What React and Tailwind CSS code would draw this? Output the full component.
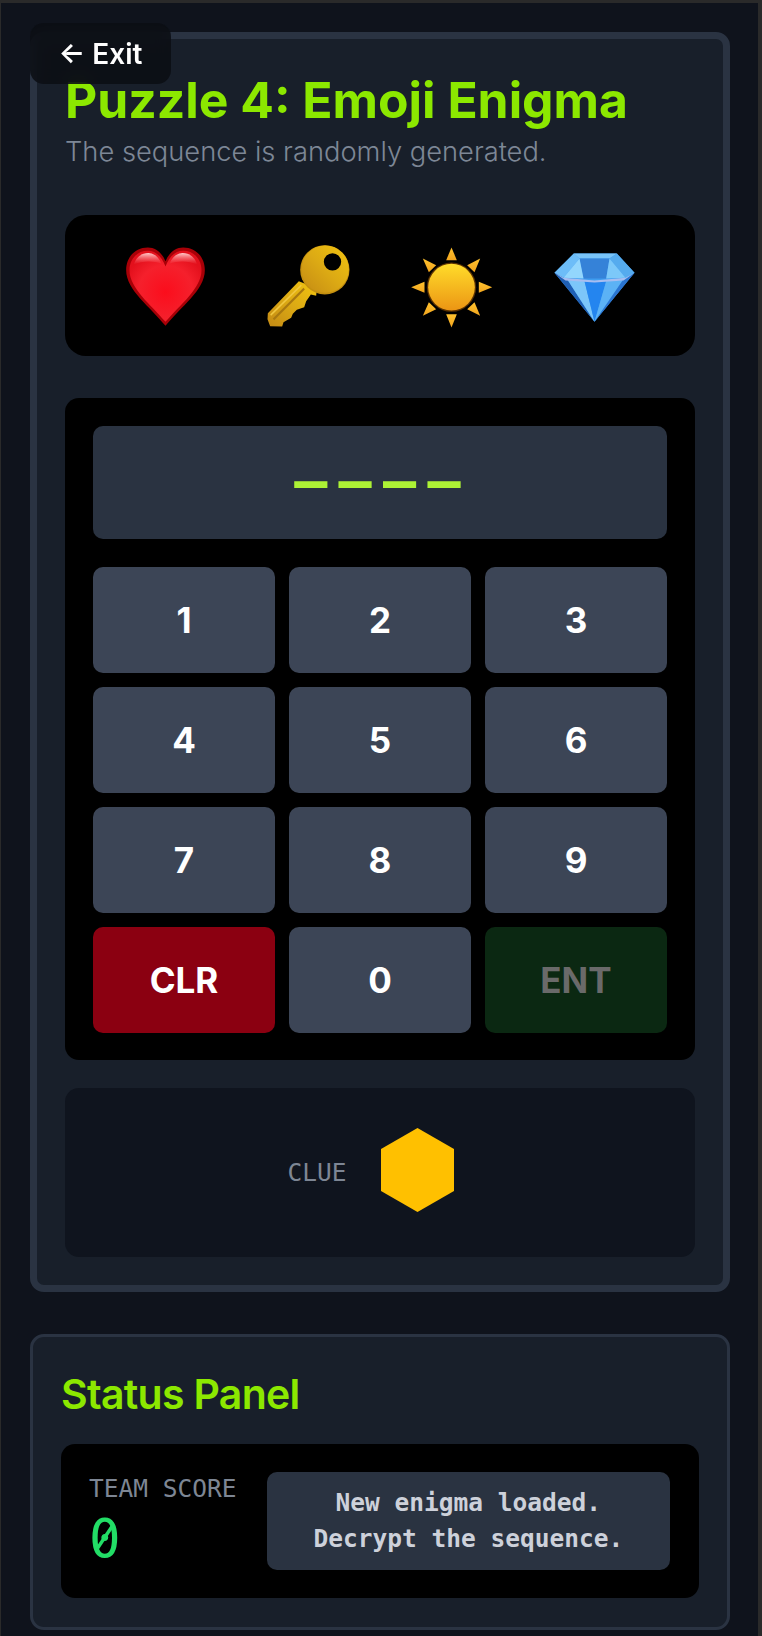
const sans = "font-['Inter',sans-serif]";
const mono = "font-['DejaVu_Sans_Mono',monospace]";

function Heart() {
  return (
    <svg viewBox="64.5 50.5 261 261" className="h-[87px] w-[87px]">
      <defs>
        <radialGradient id="heartFill" cx="50%" cy="58%" r="58%">
          <stop offset="0%" stopColor="#fb0d1c" />
          <stop offset="65%" stopColor="#f5202c" />
          <stop offset="100%" stopColor="#e3101c" />
        </radialGradient>
        <linearGradient id="heartShine" x1="0" y1="0" x2="0" y2="1">
          <stop offset="0%" stopColor="#ffc9c9" />
          <stop offset="100%" stopColor="#ff6a70" stopOpacity="0" />
        </linearGradient>
      </defs>
      <path
        d="M195 302C150 245 77 195 77 135C77 95 105 67 142 67C166 67 185 84 195 108C205 84 224 67 248 67C285 67 313 95 313 135C313 195 240 245 195 302Z"
        fill="#a80007"
      />
      <path
        d="M195 290C152 238 87 190 87 135C87 101 111 77 142 77C166 77 185 96 195 124C205 96 224 77 248 77C279 77 303 101 303 135C303 190 238 238 195 290Z"
        fill="url(#heartFill)"
      />
      <path d="M100 118C108 92 128 82 148 84C164 86 176 98 183 116C160 106 125 106 100 118Z" fill="url(#heartShine)" />
      <path d="M290 118C282 92 262 82 242 84C226 86 214 98 207 116C230 106 265 106 290 118Z" fill="url(#heartShine)" />
    </svg>
  );
}

function Key() {
  return (
    <svg viewBox="496.5 50.5 261 261" className="h-[87px] w-[87px]">
      <defs>
        <linearGradient id="keyFill" x1="1" y1="0" x2="0" y2="1">
          <stop offset="0%" stopColor="#f2c40f" />
          <stop offset="50%" stopColor="#dcaa14" />
          <stop offset="100%" stopColor="#c48a14" />
        </linearGradient>
      </defs>
      <path
        d="M598 168L505 264L504 282L512 303L548 304L552 291L575 278L580 266L592 254L614 246L620 228L634 208L650 212L652 190Z"
        fill="url(#keyFill)"
      />
      <path d="M612 188L520 280L524 285L616 193Z" fill="#a87810" />
      <path d="M604 178L512 268L515 272L607 182Z" fill="#f0c740" />
      <circle cx="676" cy="134" r="74" fill="#c48f0f" />
      <circle cx="677" cy="132" r="71" fill="url(#keyFill)" />
      <circle cx="699" cy="110" r="26" fill="#000" />
    </svg>
  );
}

function Sun() {
  return (
    <svg viewBox="85.5 50.5 261 261" className="h-[87px] w-[87px]">
      <defs>
        <linearGradient id="sunFill" x1="0" y1="0" x2="0" y2="1">
          <stop offset="0%" stopColor="#ffdc2a" />
          <stop offset="100%" stopColor="#ec9514" />
        </linearGradient>
        <linearGradient id="rayFill" x1="0" y1="0" x2="0" y2="1">
          <stop offset="0%" stopColor="#ffc22e" />
          <stop offset="100%" stopColor="#f2a51e" />
        </linearGradient>
      </defs>
      <g fill="url(#rayFill)">
        <polygon points="216,67 200,105 232,105" />
        <polygon points="338,186 298,170 298,203" />
        <polygon points="216,307 200,267 232,267" />
        <polygon points="95,186 135,170 135,203" />
        <polygon points="302,100 263,120 285,141" />
        <polygon points="130,100 148,141 170,120" />
        <polygon points="302,272 263,252 285,231" />
        <polygon points="130,272 170,252 148,231" />
      </g>
      <circle cx="216" cy="186" r="74" fill="#5c3200" />
      <circle cx="216" cy="186" r="70" fill="url(#sunFill)" />
    </svg>
  );
}

function Gem() {
  return (
    <svg viewBox="514.5 50.5 261 261" className="h-[87px] w-[87px]">
      <polygon points="583,85 712,85 765,143 645,290 525,143" fill="#3f9df0" />
      <polygon points="583,85 525,143 552,158 600,100" fill="#6dbdf8" />
      <polygon points="583,85 712,85 690,100 600,100" fill="#79c4f9" />
      <polygon points="712,85 765,143 738,158 690,100" fill="#55abee" />
      <polygon points="600,100 690,100 680,160 612,160" fill="#3582d8" />
      <polygon points="600,100 552,158 612,160" fill="#93d6fd" />
      <polygon points="690,100 738,158 680,160" fill="#7cc8f9" />
      <polygon points="525,143 645,290 565,165" fill="#1f5fb4" />
      <polygon points="565,165 615,168 645,290" fill="#7cc6f9" />
      <polygon points="615,168 680,168 645,290" fill="#2485ef" />
      <polygon points="680,168 730,165 645,290" fill="#5cb2f5" />
      <polygon points="730,165 765,143 645,290" fill="#2a74d0" />
      <polygon points="525,143 552,158 645,166 738,158 765,143 732,166 645,172 558,166" fill="#a7bdf0" />
    </svg>
  );
}

const keys = ["1", "2", "3", "4", "5", "6", "7", "8", "9"];

function PadKey({ label, className }) {
  return (
    <button className={`h-[105.8px] rounded-[10px] text-[35px] font-[650] ${className}`}>
      {label}
    </button>
  );
}

export default function App() {
  return (
    <div className={`relative h-[1636px] w-[762px] overflow-hidden border-b-0 border-l border-r-4 border-t-[3px] border-[#2a2a2a] bg-[#0f131c] pl-[29px] pr-[28px] pt-[29px] ${sans}`}>
      {/* Exit sits over the top of the panel */}
      <button className="absolute left-[29px] top-[20px] z-10 flex h-[61px] w-[141px] items-center justify-center rounded-[14px] bg-[#0a0c11]/80 text-[28px] font-semibold text-white backdrop-blur-sm">
        ← Exit
      </button>

      {/* Puzzle panel */}
      <div className="rounded-[14px] border-[7px] border-[#2a3342] bg-[#181f2a] p-[28px]">
        <h1 className="pt-[1px] text-[49.8px] font-bold leading-[64px] text-[#8ce800]">
          Puzzle 4: Emoji Enigma
        </h1>
        <p className="mb-[43px] text-[27.3px] font-[350] leading-[40px] text-[#7d8796]">
          The sequence is randomly generated.
        </p>

        <div className="mb-[42px] flex items-center justify-center gap-[56px] rounded-[21px] bg-black py-[27px]">
          <Heart />
          <Key />
          <Sun />
          <Gem />
        </div>

        {/* Keypad */}
        <div className="mb-[28px] rounded-[14px] bg-black px-[28px] pb-[27.4px] pt-[28px]">
          <div className={`mb-[28px] flex h-[113px] items-center justify-center rounded-[10px] bg-[#2a3341] pb-[2px] pl-[6px] text-[55px] font-bold leading-none tracking-[11.3px] text-[#adf235] ${mono}`}>
            ————
          </div>
          <div className="grid grid-cols-3 gap-x-[14px] gap-y-[14.2px]">
            {keys.map((k) => (
              <PadKey key={k} label={k} className="bg-[#3c4556] text-white" />
            ))}
            <PadKey label="CLR" className="bg-[#8b0011] text-white" />
            <PadKey label="0" className="bg-[#3c4556] text-white" />
            <PadKey label="ENT" className="bg-[#0b2812] text-[#6a6a6a]" />
          </div>
        </div>

        {/* Clue */}
        <div className="flex items-center justify-center gap-[34px] rounded-[14px] bg-[#0f141e] py-[39.6px] pr-[19px]">
          <span className={`pt-[2px] text-[24.5px] text-[#7d8694] ${mono}`}>CLUE</span>
          <svg viewBox="0 0 73 84" className="mb-[6px] h-[84px] w-[73px]">
            <polygon points="36.5,0 73,21 73,63 36.5,84 0,63 0,21" fill="#ffc000" />
          </svg>
        </div>
      </div>

      {/* Status panel */}
      <div className="mt-[42px] rounded-[14px] border-[3.5px] border-[#2a3342] bg-[#181f2a] pb-[28.5px] pl-[28px] pr-[28px] pt-[29px]">
        <h2 className="mb-[22px] text-[41px] font-semibold leading-[56px] tracking-[-0.7px] text-[#8ce800]">
          Status Panel
        </h2>
        <div className="flex items-start gap-[30px] rounded-[14px] bg-black py-[28px] pl-[28px] pr-[29px]">
          <div className={`shrink-0 ${mono}`}>
            <div className="text-[24.5px] leading-[34px] text-[#7d8694]">TEAM SCORE</div>
            <div className="relative mt-[5px] w-[32px] text-[52.5px] leading-[56px] text-[#22dd66]">
              0
              {/* the slash of the zero */}
              <svg viewBox="0 0 32 56" className="absolute inset-0 h-[56px] w-[32px]">
                <line x1="8" y1="38" x2="24" y2="14" stroke="#22dd66" strokeWidth="3.4" />
              </svg>
            </div>
          </div>
          <div className={`flex-1 rounded-[10px] bg-[#2a3341] py-[13px] text-center text-[24.5px] font-bold leading-[36px] text-[#cdd1da] ${mono}`}>
            New enigma loaded.
            <br />
            Decrypt the sequence.
          </div>
        </div>
      </div>
    </div>
  );
}
